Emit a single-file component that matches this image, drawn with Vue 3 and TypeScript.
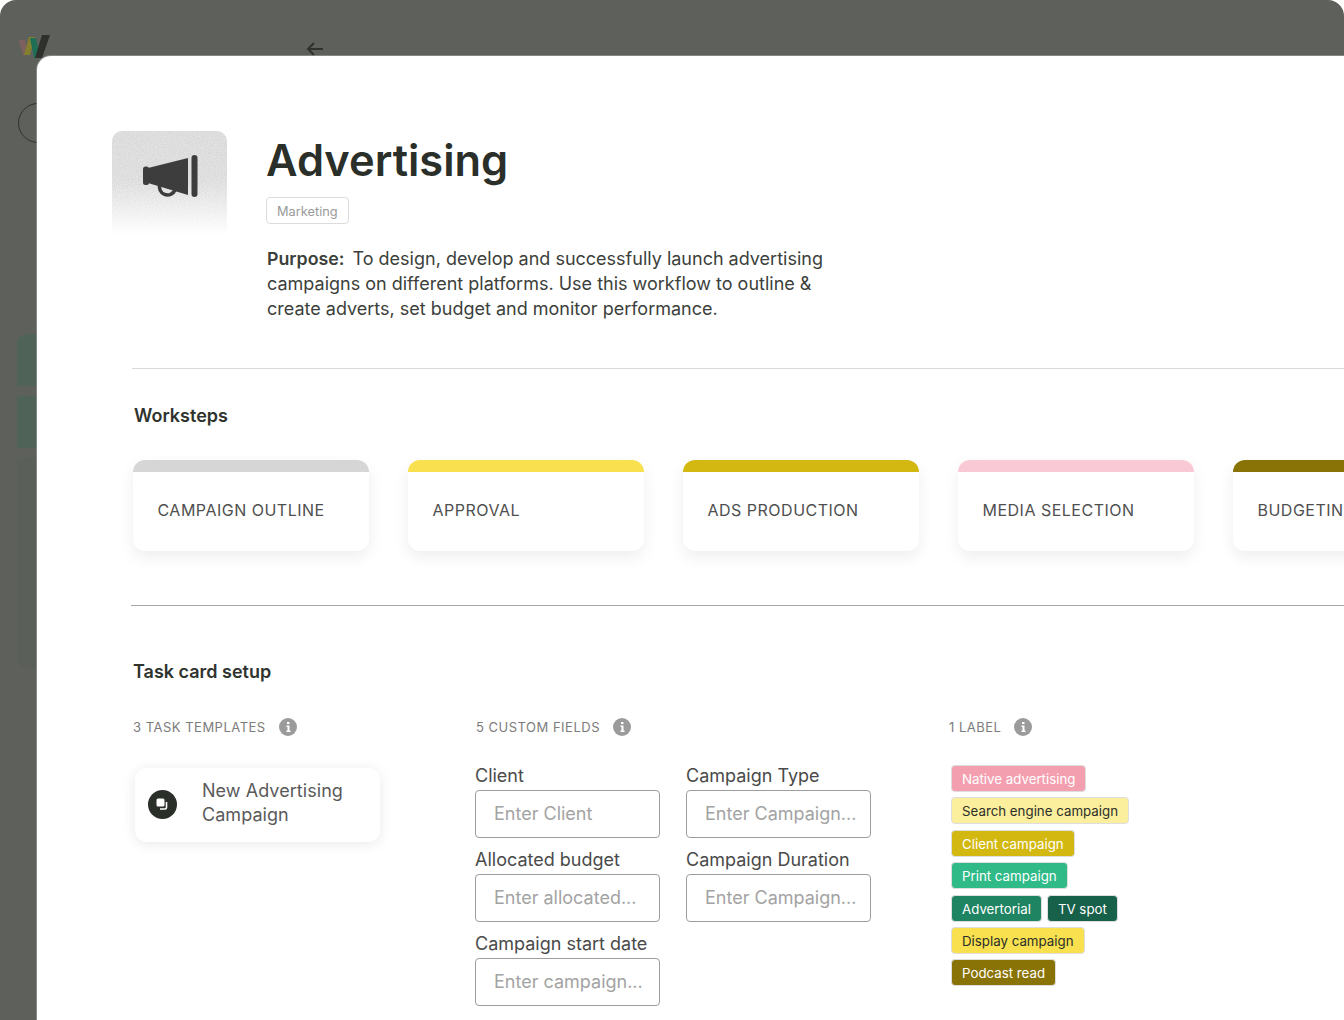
<template>
  <div class="screen">
    <div class="backdrop">
      <div class="topbar">
        <svg class="logo" width="34" height="24" viewBox="0 0 34 24">
          <polygon points="0.500,6.500 7,6 10,21 5,21" fill="#7d6060" />
          <polygon points="11,3 17,3 12,21 6,21" fill="#85802f" />
          <polygon points="12,4 18,4 22,24 16,24" fill="#1f6e56" />
          <polygon points="24,1 32,1 24,24 17,24" fill="#2d302b" />
        </svg>
        <svg class="back" width="18" height="14" viewBox="0 0 18 14" fill="none" stroke="#2f322e" stroke-width="2">
          <path d="M17 7H2M8 1 2 7l6 6" />
        </svg>
      </div>
      <div class="avatar"></div>
      <div class="nav">
        <div class="nav-item first"></div>
        <div class="nav-item"></div>
        <div class="nav-rest"></div>
      </div>
    </div>

    <main class="modal">
      <section class="intro">
        <div class="tile">
          <svg class="grain" width="115" height="105">
            <filter id="noise">
              <feTurbulence type="fractalNoise" baseFrequency="0.9" numOctaves="2" seed="4" />
              <feColorMatrix values="0 0 0 0 0.55  0 0 0 0 0.55  0 0 0 0 0.55  1.800 0 0 0 -0.600" />
            </filter>
            <rect width="115" height="105" filter="url(#noise)" />
          </svg>
          <svg class="horn" width="56" height="44" viewBox="0 0 56 44" fill="#3d3d3d">
            <rect x="0" y="11.500" width="6" height="18.500" rx="2.500" />
            <path d="M5 13 45 3v37L5 28Z" />
            <rect x="48.500" y="0" width="6" height="42" rx="3" />
            <path d="M17 29a8 8 0 0 0 15 6" fill="none" stroke="#3d3d3d" stroke-width="3.500" />
          </svg>
        </div>
        <div class="intro-text">
          <h1>Advertising</h1>
          <span class="category">Marketing</span>
          <p><strong>Purpose:</strong> To design, develop and successfully launch advertising campaigns on different platforms. Use this workflow to outline &amp; create adverts, set budget and monitor performance.</p>
        </div>
      </section>

      <hr class="rule light" />

      <h2 class="worksteps-title">Worksteps</h2>
      <div class="steps">
        <div v-for="step in steps" :key="step.name" class="step">
          <div class="step-bar" :style="{ background: step.color }"></div>
          <div class="step-name">{{ step.name }}</div>
        </div>
      </div>

      <hr class="rule dark" />

      <h2 class="setup-title">Task card setup</h2>
      <div class="setup">
        <div class="col-templates">
          <div class="col-head">
            <span>3 Task templates</span>
            <svg class="info" width="18" height="18" viewBox="0 0 18 18">
              <circle cx="9" cy="9" r="9" fill="#9b9b9b" />
              <path d="M7.500 7.500h3v5h1v1.500h-4v-1.500h1v-3.500h-1ZM8 4h2.500v2H8Z" fill="#fff" />
            </svg>
          </div>
          <div class="template">
            <span class="template-icon">
              <svg width="13" height="13" viewBox="0 0 13 13" fill="none">
                <rect x="0.500" y="0.500" width="8" height="8" rx="1.500" fill="#fff" />
                <path d="M10.500 4v5.500a1.500 1.500 0 0 1-1.500 1.500H4" stroke="#fff" stroke-width="1.600" />
              </svg>
            </span>
            <span class="template-name">New Advertising Campaign</span>
          </div>
        </div>

        <div class="col-fields">
          <div class="col-head">
            <span>5 Custom fields</span>
            <svg class="info" width="18" height="18" viewBox="0 0 18 18">
              <circle cx="9" cy="9" r="9" fill="#9b9b9b" />
              <path d="M7.500 7.500h3v5h1v1.500h-4v-1.500h1v-3.500h-1ZM8 4h2.500v2H8Z" fill="#fff" />
            </svg>
          </div>
          <div class="fields">
            <div v-for="field in fields" :key="field.label" class="field">
              <label>{{ field.label }}</label>
              <div class="input">{{ field.placeholder }}</div>
            </div>
          </div>
        </div>

        <div class="col-labels">
          <div class="col-head">
            <span>1 Label</span>
            <svg class="info" width="18" height="18" viewBox="0 0 18 18">
              <circle cx="9" cy="9" r="9" fill="#9b9b9b" />
              <path d="M7.500 7.500h3v5h1v1.500h-4v-1.500h1v-3.500h-1ZM8 4h2.500v2H8Z" fill="#fff" />
            </svg>
          </div>
          <div class="tags">
            <div v-for="(row, i) in labels" :key="i" class="tag-row">
              <span
                v-for="tag in row"
                :key="tag.text"
                class="tag"
                :style="{ background: tag.bg, color: tag.fg }"
              >{{ tag.text }}</span>
            </div>
          </div>
        </div>
      </div>
    </main>
  </div>
</template>

<script setup lang="ts">
const steps = [
  { name: 'Campaign outline', color: '#d6d6d6' },
  { name: 'Approval', color: '#f8e04e' },
  { name: 'Ads production', color: '#d2b811' },
  { name: 'Media selection', color: '#f9c9d5' },
  { name: 'Budgeting', color: '#8a7306' }
]

const fields = [
  { label: 'Client', placeholder: 'Enter Client' },
  { label: 'Campaign Type', placeholder: 'Enter Campaign...' },
  { label: 'Allocated budget', placeholder: 'Enter allocated...' },
  { label: 'Campaign Duration', placeholder: 'Enter Campaign...' },
  { label: 'Campaign start date', placeholder: 'Enter campaign...' }
]

const white = '#fff'
const ink = '#2b2f2a'

const labels = [
  [{ text: 'Native advertising', bg: '#f49fb0', fg: white }],
  [{ text: 'Search engine campaign', bg: '#fbee9c', fg: ink }],
  [{ text: 'Client campaign', bg: '#d2b811', fg: white }],
  [{ text: 'Print campaign', bg: '#2fba88', fg: white }],
  [
    { text: 'Advertorial', bg: '#1f8462', fg: white },
    { text: 'TV spot', bg: '#17604a', fg: white }
  ],
  [{ text: 'Display campaign', bg: '#f8e04e', fg: ink }],
  [{ text: 'Podcast read', bg: '#8a7306', fg: white }]
]
</script>

<style>
html,
body {
  background: #fff;
}
</style>

<style scoped>
.screen {
  position: relative;
  width: 1344px;
  height: 1020px;
  overflow: hidden;
  font-family: Inter, "Liberation Sans", sans-serif;
  color: #3c3f3b;
}

.backdrop {
  height: 100%;
  box-sizing: border-box;
  background: #5e605c;
  border-radius: 16px 16px 0 0;
  padding-top: 34px;
}

.topbar {
  display: flex;
  align-items: flex-start;
  padding-left: 18px;
}

.back {
  margin: 8px 0 0 254px;
}

.avatar {
  width: 40px;
  height: 40px;
  margin: 45px 0 0 18px;
  box-sizing: border-box;
  border: 1px solid #2f322e;
  border-radius: 50%;
}

.nav {
  width: 40px;
  margin: 191px 0 0 17px;
}

.nav-item {
  height: 52px;
  margin-bottom: 10px;
  background: #506358;
}

.nav-item.first {
  border-radius: 10px 0 0 0;
}

.nav-rest {
  height: 210px;
  background: #5b5f5a;
  border-radius: 0 0 0 10px;
}

.modal {
  position: absolute;
  top: 56px;
  left: 37px;
  width: 1400px;
  height: 1100px;
  box-sizing: border-box;
  padding: 75px 0 0 75px;
  background: #fff;
  border-radius: 14px 0 0 0;
  box-shadow: 0 0 0 1px rgba(255, 255, 255, 0.25);
}

.intro {
  display: flex;
}

.tile {
  position: relative;
  flex: none;
  display: flex;
  align-items: flex-start;
  justify-content: center;
  width: 115px;
  height: 105px;
  overflow: hidden;
  border-radius: 10px 10px 0 0;
  background: linear-gradient(#e2e2e2 0%, #e4e4e4 45%, #f5f5f5 78%, #fff 100%);
}

.grain {
  position: absolute;
  inset: 0;
  opacity: 0.5;
  -webkit-mask-image: linear-gradient(#000 50%, transparent 95%);
  mask-image: linear-gradient(#000 50%, transparent 95%);
}

.horn {
  position: relative;
  margin-top: 24px;
  margin-left: 3px;
}

.intro-text {
  margin-left: 40px;
}

h1 {
  margin: 0 0 0 -1px;
  font-size: 43.400px;
  line-height: 58px;
  font-weight: 600;
  color: #2b2f2a;
}

.category {
  display: inline-block;
  margin: 8px 0 0 -1px;
  padding: 0 10px;
  height: 27px;
  box-sizing: border-box;
  border: 1px solid #dcdcdc;
  border-radius: 4px;
  font-size: 12.800px;
  line-height: 27px;
  color: #9a9a9a;
}

.intro-text p {
  width: 570px;
  margin: 22px 0 0;
  font-size: 18px;
  line-height: 25px;
  color: #3c3f3b;
}

.intro-text strong {
  font-weight: 600;
  font-size: 17.800px;
  margin-right: 3px;
}

.rule {
  border: 0;
  margin: 0;
  height: 1px;
}

.rule.light {
  margin: 47px 0 0 20px;
  background: #d9d9d9;
}

.rule.dark {
  margin: 54px 0 0 19px;
  background: #a9a9a9;
}

h2 {
  margin: 0;
  font-size: 18px;
  line-height: 24px;
  font-weight: 600;
  color: #2f332e;
}

.worksteps-title {
  margin: 35px 0 0 22px;
}

.steps {
  display: flex;
  gap: 39px;
  margin: 32px 0 0 21.200px;
}

.step {
  flex: none;
  width: 236px;
  height: 91px;
  background: #fff;
  border-radius: 12px;
  overflow: hidden;
  box-shadow: 0 6px 16px rgba(0, 0, 0, 0.07);
}

.step-bar {
  height: 12px;
}

.step-name {
  padding: 28px 0 0 24.300px;
  font-size: 16px;
  line-height: 20px;
  letter-spacing: 0.500px;
  text-transform: uppercase;
  color: #4f4f4f;
}

.setup-title {
  margin: 53.500px 0 0 21px;
}

.setup {
  display: flex;
  margin: 33.500px 0 0 21px;
}

.col-head {
  display: flex;
  align-items: center;
  gap: 13px;
  height: 20px;
  font-size: 13px;
  letter-spacing: 0.500px;
  text-transform: uppercase;
  color: #7c7c7c;
}

.col-templates {
  width: 343px;
}

.template {
  display: flex;
  align-items: center;
  gap: 25px;
  width: 245px;
  height: 74px;
  box-sizing: border-box;
  margin: 31px 0 0 2px;
  padding: 0 20px 0 13px;
  background: #fff;
  border-radius: 12px;
  box-shadow: 0 2px 14px rgba(0, 0, 0, 0.09);
}

.template-icon {
  flex: none;
  display: flex;
  align-items: center;
  justify-content: center;
  width: 29px;
  height: 29px;
  margin-top: -2px;
  border-radius: 50%;
  background: #2b2f2a;
}

.template-name {
  margin-top: -4px;
  font-size: 18px;
  line-height: 24px;
  letter-spacing: 0.050px;
  color: #5a5a5a;
}

.col-fields {
  width: 473px;
}

.fields {
  display: grid;
  grid-template-columns: 185px 185px;
  column-gap: 26px;
  row-gap: 10px;
  width: 396px;
  margin: 27px 0 0 -1px;
}

.field label {
  display: block;
  font-size: 18px;
  line-height: 24px;
  color: #4a4a4a;
}

.input {
  height: 48px;
  box-sizing: border-box;
  margin-top: 2px;
  padding-left: 18px;
  border: 1px solid #9d9d9d;
  border-radius: 4px;
  font-size: 18px;
  line-height: 46px;
  color: #a3a3a3;
  white-space: nowrap;
}

.tags {
  display: flex;
  flex-direction: column;
  gap: 5.400px;
  margin: 28px 0 0 2px;
}

.tag-row {
  display: flex;
  gap: 5px;
}

.tag {
  height: 27px;
  box-sizing: border-box;
  padding: 0 10px;
  border: 1px solid #dedede;
  border-radius: 4px;
  font-size: 13.300px;
  line-height: 26.500px;
}
</style>
